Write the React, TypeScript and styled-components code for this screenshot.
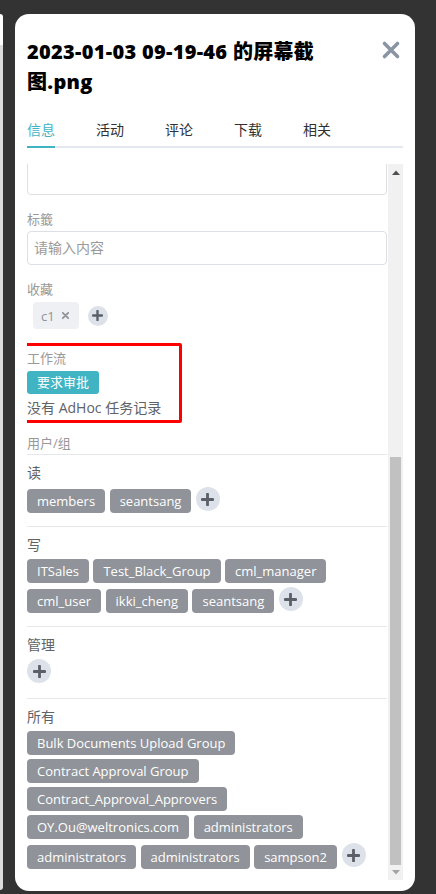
import React from "react";
import styled, { createGlobalStyle } from "styled-components";

const GlobalStyle = createGlobalStyle`
  html, body { margin: 0; padding: 0; background: #333333; }
  body { font-family: "Open Sans", "Noto Sans CJK SC", sans-serif; }
  * { box-sizing: border-box; }
`;

const TEAL = "#40b4c3";

const Page = styled.div`
  width: 436px;
  height: 894px;
  background: #333333;
  display: flex;
  align-items: flex-start;
  padding-top: 14px;
  overflow: hidden;
`;

const BackPanel = styled.div`
  width: 3px;
  height: 876px;
  border-radius: 0 10px 10px 0;
  background: linear-gradient(#ffffff 0 31px, #dcdcdc 31px);
  flex-shrink: 0;
`;

const Modal = styled.div`
  margin-left: 12px;
  width: 400px;
  height: 877px;
  background: #ffffff;
  border-radius: 14px;
  padding: 23px 12px 11px 12px;
  display: flex;
  flex-direction: column;
`;

const Header = styled.div`
  display: flex;
  justify-content: space-between;
  align-items: flex-start;
`;

const Title = styled.h1`
  margin: 0;
  width: 300px;
  font-size: 20px;
  line-height: 30px;
  font-weight: 800;
  color: #000000;
  letter-spacing: 0.3px;
`;

const CloseButton = styled.button`
  border: none;
  background: none;
  padding: 0;
  margin: 3px 2px 0 0;
  width: 20px;
  height: 20px;
  display: flex;
  cursor: pointer;
`;

const TabBar = styled.div`
  margin-top: 11px;
  display: flex;
  gap: 41px;
  border-bottom: 2px solid #e4e7ed;
`;

const Tab = styled.div<{ $active?: boolean }>`
  padding-top: 4px;
  line-height: 36px;
  height: 40px;
  font-size: 14px;
  margin-bottom: -2px;
  color: ${(p) => (p.$active ? TEAL : "#303133")};
  border-bottom: 2px solid ${(p) => (p.$active ? TEAL : "transparent")};
`;

const Body = styled.div`
  margin-top: 16px;
  flex: 1;
  min-height: 0;
  display: flex;
`;

const Viewport = styled.div`
  width: 361px;
  overflow: hidden;
  display: flex;
  flex-direction: column;
  justify-content: flex-end;
`;

const Content = styled.div`
  flex-shrink: 0;
  width: 360px;
  padding-bottom: 11px;
`;

const ScrollTrack = styled.div`
  width: 15px;
  background: #f1f1f1;
  display: flex;
  flex-direction: column;
`;

const ArrowBox = styled.div`
  height: 16px;
  display: flex;
  align-items: center;
  justify-content: center;
  flex-shrink: 0;
`;

const Rail = styled.div`
  flex: 1;
  display: flex;
  flex-direction: column;
  justify-content: flex-end;
  padding: 0 2px;
`;

const Thumb = styled.div<{ $size: number }>`
  height: ${(p) => p.$size}px;
  background: #c1c1c1;
  margin-bottom: -1px;
`;

const Field = styled.div<{ $gap?: number }>`
  margin-bottom: ${(p) => p.$gap ?? 14}px;
`;

const Label = styled.div`
  font-size: 13px;
  line-height: 20px;
  color: #999999;
  margin-bottom: 2px;
`;

const TextInput = styled.div<{ $h?: number }>`
  height: ${(p) => p.$h ?? 34}px;
  border: 1px solid #dcdfe6;
  border-radius: 4px;
  padding: 0 6px;
  font-size: 14px;
  line-height: 32px;
  color: #9a9a9a;
`;

const CollectRow = styled.div`
  display: flex;
  align-items: center;
  gap: 9px;
  padding-left: 6px;
  margin-top: 3px;
`;

const LightTag = styled.span`
  height: 27px;
  padding: 0 9px 0 8px;
  border-radius: 4px;
  background: #eef0f3;
  color: #909399;
  font-size: 13px;
  display: inline-flex;
  align-items: center;
  gap: 6px;
`;

const Workflow = styled.div`
  margin-left: -8px;
  width: 163px;
  border: 3px solid #ff0000;
  border-radius: 2px;
  padding: 2px 0 2px 5px;
`;

const FlowLabel = styled.div`
  font-size: 13px;
  line-height: 20px;
  color: #999999;
`;

const ApproveButton = styled.button`
  margin-top: 3px;
  height: 23px;
  padding: 0 10px;
  border: none;
  border-radius: 3px;
  background: ${TEAL};
  color: #ffffff;
  font-family: inherit;
  font-size: 13px;
  line-height: 23px;
  display: block;
`;

const NoRecord = styled.div`
  margin-top: 4px;
  font-size: 14px;
  line-height: 20px;
  color: #606266;
`;

const GroupHeader = styled.div`
  margin: 10px 0 1px;
  font-size: 13px;
  line-height: 20px;
  color: #999999;
`;

const PermSection = styled.div`
  border-top: 1px solid #e4e7ed;
  padding: 8px 0 13px;
  &:last-child {
    padding-bottom: 0;
  }
`;

const PermTitle = styled.div`
  font-size: 14px;
  line-height: 20px;
  color: #606266;
  margin-bottom: 4px;
`;

const TagWrap = styled.div`
  display: flex;
  flex-wrap: wrap;
  align-items: flex-end;
  column-gap: 4.5px;
  row-gap: 4px;
`;

const Tag = styled.span`
  height: 24px;
  padding: 0 10px;
  border-radius: 4px;
  background: #909399;
  color: #ffffff;
  font-size: 13px;
  line-height: 24px;
  white-space: nowrap;
`;

const PlusCircle = styled.span<{ $size?: number }>`
  width: ${(p) => p.$size ?? 24}px;
  height: ${(p) => p.$size ?? 24}px;
  border-radius: 50%;
  background: #dde2ea;
  display: inline-flex;
  align-items: center;
  justify-content: center;
  margin-bottom: ${(p) => (p.$size ? 0 : 2)}px;
  flex-shrink: 0;
`;

const Plus = ({ size = 12 }: { size?: number }) => (
  <svg width={size} height={size} viewBox="0 0 12 12">
    <path d="M6 1v10M1 6h10" stroke="#5b6068" strokeWidth="2.6" strokeLinecap="round" />
  </svg>
);

const AddButton = ({ size }: { size?: number }) => (
  <PlusCircle $size={size}>
    <Plus size={size ? 11 : 13} />
  </PlusCircle>
);

const sections: { title: string; tags: string[] }[] = [
  { title: "读", tags: ["members", "seantsang"] },
  {
    title: "写",
    tags: ["ITSales", "Test_Black_Group", "cml_manager", "cml_user", "ikki_cheng", "seantsang"],
  },
  { title: "管理", tags: [] },
  {
    title: "所有",
    tags: [
      "Bulk Documents Upload Group",
      "Contract Approval Group",
      "Contract_Approval_Approvers",
      "OY.Ou@weltronics.com",
      "administrators",
      "administrators",
      "administrators",
      "sampson2",
    ],
  },
];

export default function App() {
  const tabs = ["信息", "活动", "评论", "下载", "相关"];

  return (
    <>
      <GlobalStyle />
      <Page>
        <BackPanel />
        <Modal>
          <Header>
            <Title>2023-01-03 09-19-46 的屏幕截图.png</Title>
            <CloseButton aria-label="close">
              <svg width="20" height="20" viewBox="0 0 20 20">
                <path d="M3.5 3.5l13 13M16.5 3.5l-13 13" stroke="#8a94a4" strokeWidth="3.6" strokeLinecap="round" />
              </svg>
            </CloseButton>
          </Header>
          <TabBar>
            {tabs.map((t, i) => (
              <Tab key={t} $active={i === 0}>
                {t}
              </Tab>
            ))}
          </TabBar>
          <Body>
            <Viewport>
              <Content>
                <Field>
                  <TextInput $h={120} />
                </Field>
                <Field>
                  <Label>标籤</Label>
                  <TextInput>请输入内容</TextInput>
                </Field>
                <Field>
                  <Label>收藏</Label>
                  <CollectRow>
                    <LightTag>
                      c1
                      <svg width="9" height="9" viewBox="0 0 10 10">
                        <path d="M2 2l6 6M8 2l-6 6" stroke="#909399" strokeWidth="2" strokeLinecap="round" />
                      </svg>
                    </LightTag>
                    <AddButton size={20} />
                  </CollectRow>
                </Field>
                <Workflow>
                  <FlowLabel>工作流</FlowLabel>
                  <ApproveButton>要求审批</ApproveButton>
                  <NoRecord>没有 AdHoc 任务记录</NoRecord>
                </Workflow>
                <GroupHeader>用户/组</GroupHeader>
                {sections.map((s) => (
                  <PermSection key={s.title}>
                    <PermTitle>{s.title}</PermTitle>
                    <TagWrap>
                      {s.tags.map((t, i) => (
                        <Tag key={t + i}>{t}</Tag>
                      ))}
                      <AddButton />
                    </TagWrap>
                  </PermSection>
                ))}
              </Content>
            </Viewport>
            <ScrollTrack>
              <ArrowBox>
                <svg width="8" height="5" viewBox="0 0 8 5">
                  <path d="M0 5L4 0.5L8 5Z" fill="#505050" />
                </svg>
              </ArrowBox>
              <Rail>
                <Thumb $size={408} />
              </Rail>
              <ArrowBox>
                <svg width="8" height="5" viewBox="0 0 8 5">
                  <path d="M0 0L4 4.5L8 0Z" fill="#a3a3a3" />
                </svg>
              </ArrowBox>
            </ScrollTrack>
          </Body>
        </Modal>
      </Page>
    </>
  );
}
